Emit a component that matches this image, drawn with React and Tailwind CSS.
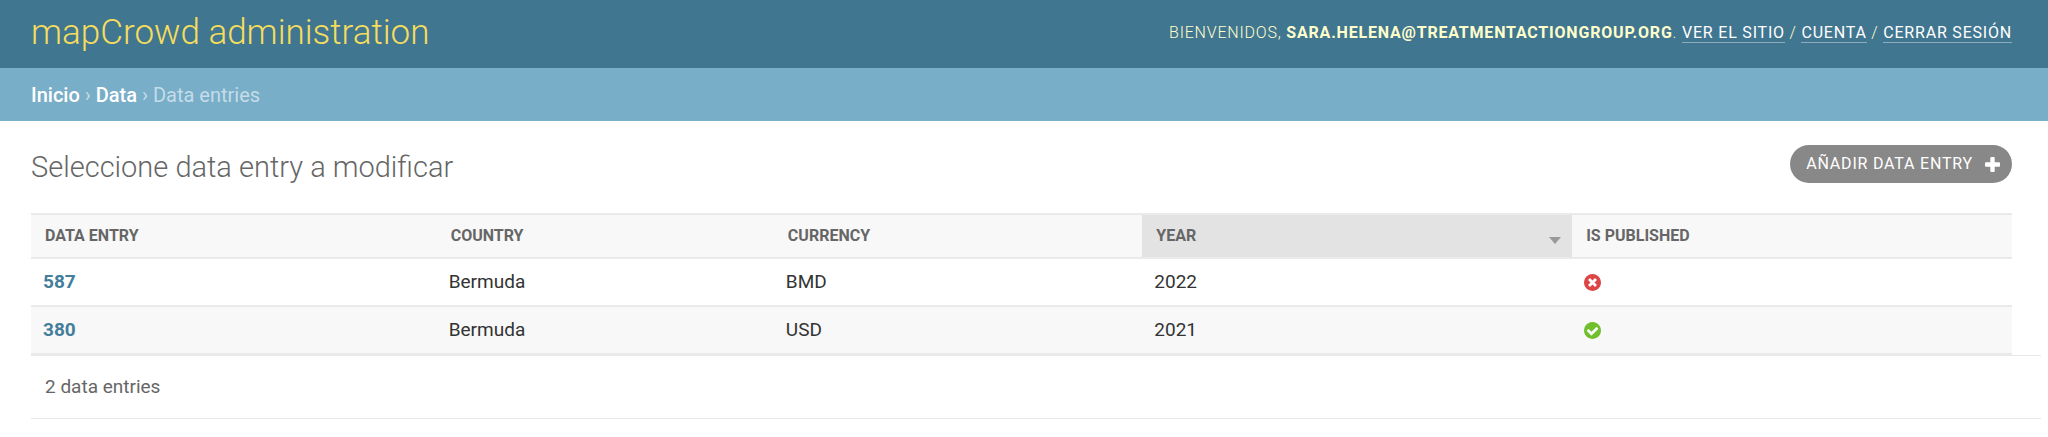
const entries = [
  { id: "587", country: "Bermuda", currency: "BMD", year: "2022", published: false },
  { id: "380", country: "Bermuda", currency: "USD", year: "2021", published: true },
];

function PublishedIcon({ published }) {
  return (
    <svg
      className="block size-[17px]"
      viewBox="128 128 1536 1536"
      role="img"
      aria-label={published ? "True" : "False"}
    >
      {published ? (
        <path
          fill="#70bf2b"
          d="M1412 734q0-28-18-46l-91-90q-19-19-45-19t-45 19l-408 407-226-226q-19-19-45-19t-45 19l-91 90q-18 18-18 46 0 27 18 45l362 362q19 19 45 19 27 0 46-19l543-543q18-18 18-45zm252 162q0 209-103 385.500t-279.500 279.500-385.500 103-385.500-103-279.500-279.500-103-385.500 103-385.500 279.500-279.500 385.500-103 385.500 103 279.500 279.500 103 385.500z"
        />
      ) : (
        <path
          fill="#dd4646"
          d="M1277 1122q0-26-19-45l-181-181 181-181q19-19 19-45 0-27-19-46l-90-90q-19-19-46-19-26 0-45 19l-181 181-181-181q-19-19-45-19-27 0-46 19l-90 90q-19 19-19 46 0 26 19 45l181 181-181 181q-19 19-19 45 0 27 19 46l90 90q19 19 46 19 26 0 45-19l181-181 181 181q19 19 45 19 27 0 46-19l90-90q19-19 19-46zm387-226q0 209-103 385.500t-279.500 279.500-385.500 103-385.500-103-279.500-279.500-103-385.500 103-385.500 279.500-279.500 385.500-103 385.500 103 279.500 279.500 103 385.500z"
        />
      )}
    </svg>
  );
}

function HeaderCell({ children, className = "pr-3.5" }) {
  return (
    <th scope="col" className={`pl-3.5 text-left font-bold ${className}`}>
      {children}
    </th>
  );
}

function ToolLink({ children }) {
  return (
    <a href="#" className="border-b border-white/40 font-normal text-white">
      {children}
    </a>
  );
}

export default function App() {
  return (
    <div className="bg-white font-[Roboto,sans-serif] text-[19px] text-[#333]">
      <header className="flex h-[68px] items-center justify-between bg-[#417690] pr-9 pl-[31px] pb-0.5">
        <div className="text-[35px] leading-10 font-light">
          <a href="#" className="text-[#f5dd5d]">mapCrowd administration</a>
        </div>
        <div className="text-base leading-5 font-light tracking-wider text-[#ffc] uppercase">
          Bienvenidos, <strong className="font-bold">sara.helena@treatmentactiongroup.org</strong>.{" "}
          <ToolLink>Ver el sitio</ToolLink> / <ToolLink>Cuenta</ToolLink> /{" "}
          <ToolLink>Cerrar sesión</ToolLink>
        </div>
      </header>

      <nav className="flex h-[53px] items-center bg-[#79aec8] px-[31px] text-xl text-[#c4dce8]" aria-label="Breadcrumb">
        <div>
          <a href="#" className="font-medium text-white">Inicio</a> ›{" "}
          <a href="#" className="font-medium text-white">Data</a> › Data entries
        </div>
      </nav>

      <main className="pt-6 pl-[31px]">
        <div className="mr-9 mb-[26px] flex items-start justify-between">
          <h1 className="pt-0.5 text-[29px] leading-10 font-light text-[#666]">
            Seleccione data entry a modificar
          </h1>
          <a
            href="#"
            className="flex h-[38px] items-center gap-3 rounded-full bg-[#888] pr-3 pl-4 text-base leading-5 tracking-wider text-white uppercase"
          >
            Añadir data entry
            <svg className="size-[15px]" viewBox="0 0 15 15" aria-hidden="true">
              <path
                fill="#fff"
                d="M6.300 0h2.400q1 0 1 1v4.300h4.300q1 0 1 1v2.400q0 1-1 1H9.700V14q0 1-1 1H6.300q-1 0-1-1V9.700H1q-1 0-1-1V6.300q0-1 1-1h4.300V1q0-1 1-1z"
              />
            </svg>
          </a>
        </div>

        <div className="mr-9">
          <table className="w-full table-fixed border-collapse">
            <colgroup>
              <col className="w-[20.48%]" />
              <col className="w-[17.02%]" />
              <col className="w-[18.6%]" />
              <col className="w-[21.7%]" />
              <col />
            </colgroup>
            <thead>
              <tr className="h-11 border-y-2 border-[#eaeaea] bg-[#f8f8f8] text-base leading-5 text-[#666] uppercase">
                <HeaderCell>Data entry</HeaderCell>
                <HeaderCell>Country</HeaderCell>
                <HeaderCell>Currency</HeaderCell>
                <HeaderCell className="bg-[#e3e3e3] pr-[11px]">
                  <div className="flex items-center justify-between">
                    Year
                    <svg className="mt-2 h-[7px] w-3" viewBox="0 0 12 7" role="img" aria-label="Descending">
                      <path d="M0 0h12L6 7z" fill="#999" />
                    </svg>
                  </div>
                </HeaderCell>
                <HeaderCell>Is published</HeaderCell>
              </tr>
            </thead>
            <tbody>
              {entries.map((entry) => (
                <tr key={entry.id} className="h-12 border-b-2 border-[#eaeaea] even:bg-[#f8f8f8]">
                  <th scope="row" className="px-3 text-left font-bold">
                    <a href="#" className="text-[#447e9b]">{entry.id}</a>
                  </th>
                  <td className="px-3">{entry.country}</td>
                  <td className="px-3">{entry.currency}</td>
                  <td className="px-3">{entry.year}</td>
                  <td className="px-3">
                    <PublishedIcon published={entry.published} />
                  </td>
                </tr>
              ))}
            </tbody>
          </table>
        </div>

        <p className="mr-[7px] border-y border-[#e8e8e8] px-3.5 py-[17px] leading-7 text-[#666]">
          2 data entries
        </p>
      </main>
    </div>
  );
}
